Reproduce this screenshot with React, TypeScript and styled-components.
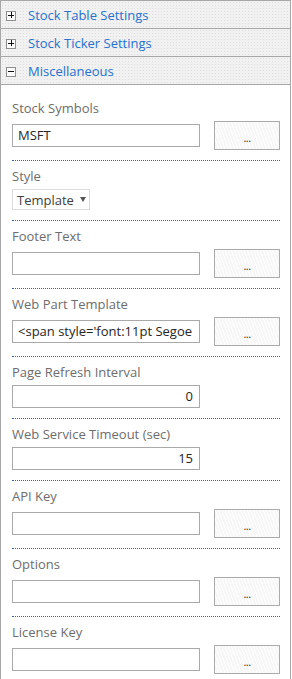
import styled, { createGlobalStyle } from 'styled-components';

const GlobalStyle = createGlobalStyle`
  html, body {
    margin: 0;
    padding: 0;
    background: #ffffff;
  }
  body {
    font-family: "Segoe UI", "Open Sans", sans-serif;
  }
`;

const Panel = styled.div`
  width: 291px;
  box-sizing: border-box;
  border-left: 1px solid #a7a7a7;
  border-right: 1px solid #a7a7a7;
  background: #ffffff;
`;

const Header = styled.div<{ first?: boolean }>`
  display: flex;
  align-items: center;
  height: 27px;
  border-top: ${({ first }) => (first ? '1px solid #a7a7a7' : 'none')};
  border-bottom: 1px solid #a7a7a7;
  background-color: #f1f1f1;
  background-image: radial-gradient(circle, #dedede 0.6px, transparent 0.9px);
  background-size: 3px 3px;
  padding-left: 5px;
`;

const Toggle = styled.span`
  position: relative;
  box-sizing: border-box;
  width: 10px;
  height: 10px;
  border: 1px solid #8f8f8f;
  background: #fbfbfb;
  margin-right: 12px;
  margin-top: 2px;
  flex: none;

  &::before,
  &::after {
    content: '';
    position: absolute;
    background: #111;
  }
  &::before {
    left: 1px;
    top: 3px;
    width: 6px;
    height: 1px;
  }
`;

const PlusToggle = styled(Toggle)`
  &::after {
    left: 3.5px;
    top: 0.5px;
    width: 1px;
    height: 6px;
  }
`;

const HeaderTitle = styled.span`
  color: #2672cf;
  font-size: 13px;
`;

const Body = styled.div`
  padding: 8px 10px 0 11px;
`;

const Section = styled.div<{ last?: boolean }>`
  padding: 6px 0 10px;
  border-bottom: ${({ last }) => (last ? 'none' : '1px dotted #3e5fb4')};
`;

const Label = styled.div`
  height: 18px;
  line-height: 18px;
  margin-bottom: 4px;
  font-size: 13px;
  color: #6d6d6d;
`;

const Row = styled.div<{ withButton?: boolean }>`
  display: flex;
  align-items: center;
  gap: 14px;
  height: ${({ withButton }) => (withButton ? '29px' : 'auto')};
`;

const TextBox = styled.div<{ align?: 'left' | 'right' }>`
  box-sizing: border-box;
  width: 188px;
  height: 23px;
  border: 1px solid #a9a9a9;
  padding: 0 6px 0 5px;
  font-size: 13px;
  line-height: 21px;
  color: #262626;
  text-align: ${({ align }) => align || 'left'};
  white-space: nowrap;
  overflow: hidden;
  background: #fff;
`;

const DotsButton = styled.div`
  box-sizing: border-box;
  width: 66px;
  height: 29px;
  border: 1px solid #ababab;
  background-color: #f7f7f7;
  background-image: repeating-linear-gradient(
    70deg,
    rgba(255, 255, 255, 0.9) 0 1px,
    transparent 1px 3px
  );
  display: flex;
  align-items: center;
  justify-content: center;
  font-size: 11px;
  color: #333;
  padding-top: 4px;
  letter-spacing: -0.5px;
`;

const Select = styled.div`
  box-sizing: border-box;
  width: 78px;
  height: 21px;
  border: 1px solid #dcdcdc;
  display: flex;
  align-items: center;
  padding-left: 4px;
  font-size: 13px;
  color: #404040;
`;

const Arrow = styled.span`
  margin-left: 6px;
  width: 0;
  height: 0;
  border-left: 3px solid transparent;
  border-right: 3px solid transparent;
  border-top: 5px solid #555;
`;

type Field =
  | { label: string; kind: 'button'; value?: string }
  | { label: string; kind: 'number'; value: string }
  | { label: string; kind: 'select'; value: string };

const fields: Field[] = [
  { label: 'Stock Symbols', kind: 'button', value: 'MSFT' },
  { label: 'Style', kind: 'select', value: 'Template' },
  { label: 'Footer Text', kind: 'button' },
  { label: 'Web Part Template', kind: 'button', value: "<span style='font:11pt Segoe" },
  { label: 'Page Refresh Interval', kind: 'number', value: '0' },
  { label: 'Web Service Timeout (sec)', kind: 'number', value: '15' },
  { label: 'API Key', kind: 'button' },
  { label: 'Options', kind: 'button' },
  { label: 'License Key', kind: 'button' },
];

function FieldRow({ field }: { field: Field }) {
  if (field.kind === 'select') {
    return (
      <Row>
        <Select>
          {field.value}
          <Arrow />
        </Select>
      </Row>
    );
  }
  if (field.kind === 'number') {
    return (
      <Row>
        <TextBox align="right">{field.value}</TextBox>
      </Row>
    );
  }
  return (
    <Row withButton>
      <TextBox>{field.value}</TextBox>
      <DotsButton>...</DotsButton>
    </Row>
  );
}

export default function App() {
  return (
    <>
      <GlobalStyle />
      <Panel>
        <Header first>
          <PlusToggle />
          <HeaderTitle>Stock Table Settings</HeaderTitle>
        </Header>
        <Header>
          <PlusToggle />
          <HeaderTitle>Stock Ticker Settings</HeaderTitle>
        </Header>
        <Header>
          <Toggle />
          <HeaderTitle>Miscellaneous</HeaderTitle>
        </Header>
        <Body>
          {fields.map((f, i) => (
            <Section key={f.label} last={i === fields.length - 1}>
              <Label>{f.label}</Label>
              <FieldRow field={f} />
            </Section>
          ))}
        </Body>
      </Panel>
    </>
  );
}
